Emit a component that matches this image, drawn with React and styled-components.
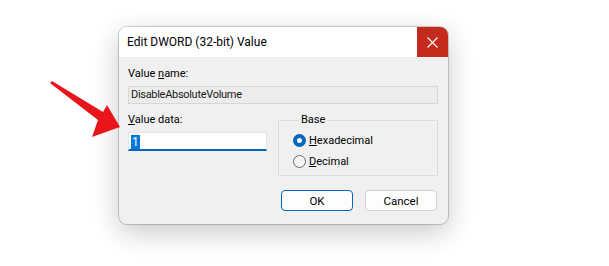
import styled, { createGlobalStyle } from "styled-components";

const GlobalStyle = createGlobalStyle`
  html, body {
    margin: 0;
    padding: 0;
    background: #ffffff;
  }
  * {
    box-sizing: border-box;
  }
`;

export default function App() {
  return (
    <Page>
      <GlobalStyle />
      <Arrow />
      <Dialog>
        <TitleBar>
          <Title>Edit DWORD (32-bit) Value</Title>
          <CloseButton aria-label="Close">
            <svg width="11" height="11" viewBox="0 0 11 11">
              <path d="M0.5 0.5 L10.5 10.5 M10.5 0.5 L0.5 10.5" stroke="#fff" strokeWidth="1.1" />
            </svg>
          </CloseButton>
        </TitleBar>
        <Body>
          <Label>
            Value <u>n</u>ame:
          </Label>
          <NameField>DisableAbsoluteVolume</NameField>
          <Row>
            <DataColumn>
              <Label>
                <u>V</u>alue data:
              </Label>
              <DataInput>
                <Selected>1</Selected>
              </DataInput>
            </DataColumn>
            <GroupBox>
              <Legend>Base</Legend>
              <RadioRow>
                <Radio checked />
                <span>
                  <u>H</u>exadecimal
                </span>
              </RadioRow>
              <RadioRow>
                <Radio />
                <span>
                  <u>D</u>ecimal
                </span>
              </RadioRow>
            </GroupBox>
          </Row>
          <Buttons>
            <Button primary>OK</Button>
            <Button>Cancel</Button>
          </Buttons>
        </Body>
      </Dialog>
    </Page>
  );
}

function Arrow() {
  return (
    <ArrowSvg width="140" height="150" viewBox="0 0 140 150">
      <path d="M50 83 L52 81 L103 112 L107 105 L120 127 L92 137 L98 120 Z" fill="#e8151b" />
    </ArrowSvg>
  );
}

const Page = styled.div`
  position: relative;
  width: 609px;
  height: 266px;
  padding: 27px 0 0 119px;
  font-family: Roboto, "Liberation Sans", Arial, sans-serif;
`;

const ArrowSvg = styled.svg`
  position: absolute;
  left: 0;
  top: 0;
`;

const Dialog = styled.div`
  width: 329px;
  border-radius: 8px;
  overflow: hidden;
  background: #f0f0f0;
  box-shadow: 0 0 0 1px rgba(0, 0, 0, 0.18), 0 8px 28px rgba(0, 0, 0, 0.22);
`;

const TitleBar = styled.div`
  display: flex;
  justify-content: space-between;
  align-items: stretch;
  height: 30px;
  background: #ffffff;
`;

const Title = styled.div`
  display: flex;
  align-items: center;
  padding-left: 8px;
  font-size: 12px;
  color: #000;
`;

const CloseButton = styled.div`
  display: flex;
  align-items: center;
  justify-content: center;
  width: 31px;
  background: #c42b1c;
`;

const Body = styled.div`
  display: flex;
  flex-direction: column;
  padding: 10px 10px 13px 9px;
  font-size: 11px;
  color: #000;
`;

const Label = styled.div`
  line-height: 14px;
  height: 14px;
  margin-bottom: 5px;
`;

const NameField = styled.div`
  height: 18px;
  line-height: 16px;
  padding: 0 2px;
  background: #ececec;
  border: 1px solid #d6d6d6;
  color: #1a1a1a;
  letter-spacing: -0.3px;
`;

const Row = styled.div`
  display: flex;
  gap: 11px;
  margin-top: 9px;
`;

const DataColumn = styled.div`
  display: flex;
  flex-direction: column;
  width: 139px;
`;

const DataInput = styled.div`
  height: 19px;
  padding: 2px 2px 0;
  background: #ffffff;
  border: 1px solid #e2e2e2;
  border-bottom: 2px solid #0067c0;
  font-size: 12px;
`;

const Selected = styled.span`
  display: inline-block;
  height: 14px;
  line-height: 14px;
  padding: 0 1px;
  background: #0078d7;
  color: #fff;
`;

const GroupBox = styled.fieldset`
  flex: 1;
  margin: 0;
  height: 63px;
  padding: 6px 0 0 14px;
  border: 1px solid #dcdcdc;
  display: flex;
  flex-direction: column;
  gap: 7px;
`;

const Legend = styled.legend`
  padding: 0 2px;
  margin-left: 6px;
  line-height: 14px;
`;

const RadioRow = styled.div`
  display: flex;
  align-items: center;
  gap: 3px;
  height: 14px;
`;

const Radio = styled.span`
  width: 13px;
  height: 13px;
  border-radius: 50%;
  flex-shrink: 0;
  background: ${(p) => (p.checked ? "#ffffff" : "#f5f5f5")};
  border: ${(p) => (p.checked ? "4px solid #0067c0" : "1px solid #6a6a6a")};
`;

const Buttons = styled.div`
  display: flex;
  justify-content: flex-end;
  gap: 12px;
  margin-top: 14px;
  padding-right: 1px;
`;

const Button = styled.div`
  width: 72px;
  height: 21px;
  display: flex;
  align-items: center;
  justify-content: center;
  border-radius: 4px;
  background: #fdfdfd;
  border: 1px solid ${(p) => (p.primary ? "#0067c0" : "#d0d0d0")};
  font-size: 11.5px;
`;
